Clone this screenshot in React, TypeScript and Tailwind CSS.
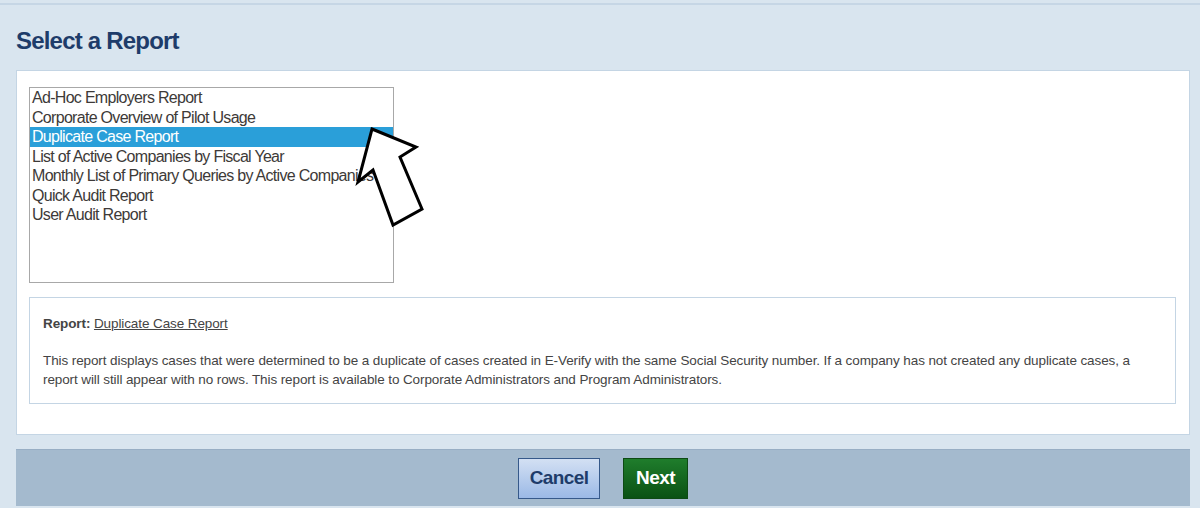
import React from "react";

const items = [
  "Ad-Hoc Employers Report",
  "Corporate Overview of Pilot Usage",
  "Duplicate Case Report",
  "List of Active Companies by Fiscal Year",
  "Monthly List of Primary Queries by Active Companies",
  "Quick Audit Report",
  "User Audit Report",
];

export default function App() {
  return (
    <div className="relative w-[1200px] h-[508px] overflow-hidden bg-[#d9e5ef] pt-[3px] font-['Liberation_Sans',Arial,sans-serif]">
      <div className="h-full border-t-2 border-[#c6d6e5] pl-[16px] pr-[10px]">
        <h1 className="h-[65px] pt-[22px] text-[24px] leading-[28px] font-bold tracking-[-0.8px] text-[#1e3c6a]">
          Select a Report
        </h1>
        <div className="h-[365px] bg-white border border-[#c4d5e4] pl-[12px] pr-[13px] pt-[16px]">
          <div className="w-[365px] h-[196px] border border-[#a8a8a8] bg-white overflow-hidden">
            {items.map((it, i) => (
              <div
                key={it}
                className={
                  "h-[19.5px] pl-[2px] text-[16px] leading-[19.5px] tracking-[-0.7px] whitespace-nowrap " +
                  (i === 2 ? "bg-[#2a9fd9] text-white" : "text-[#3d3a38]")
                }
              >
                {it}
              </div>
            ))}
          </div>
          <div className="mt-[14px] h-[107px] border border-[#c4d5e4] pl-[13px] pt-[16px] text-[#444] text-[13.5px] leading-[19px] tracking-[-0.1px]">
            <div>
              <span className="font-bold">Report:</span>{" "}
              <span className="underline">Duplicate Case Report</span>
            </div>
            <p className="mt-[18px] whitespace-nowrap">
              This report displays cases that were determined to be a duplicate of cases created in E-Verify with the same Social Security number. If a company has not created any duplicate cases, a
              <br />
              report will still appear with no rows. This report is available to Corporate Administrators and Program Administrators.
            </p>
          </div>
        </div>
        <div className="mt-[14px] h-[57px] bg-[#a4bace] border-t border-[#98aec4] flex items-center justify-center gap-[23px]">
          <button className="w-[82px] h-[41px] border border-[#36598a] bg-gradient-to-b from-[#d3e0f3] to-[#9bb9e6] text-[#1e3c6a] font-bold text-[19px] tracking-[-0.6px]">
            Cancel
          </button>
          <button className="w-[65px] h-[41px] border border-[#0d4a14] bg-gradient-to-b from-[#1f7d2c] to-[#0a5214] text-white font-bold text-[19px] tracking-[-0.6px]">
            Next
          </button>
        </div>
      </div>
      <svg
        className="absolute left-0 top-0 pointer-events-none"
        width="1200"
        height="508"
        viewBox="0 0 1200 508"
      >
        <polygon
          points="372,129 416,147 400,157 422,209 393,225 373,170 358,182"
          fill="white"
          stroke="black"
          strokeWidth="3"
          strokeLinejoin="miter"
        />
      </svg>
    </div>
  );
}
